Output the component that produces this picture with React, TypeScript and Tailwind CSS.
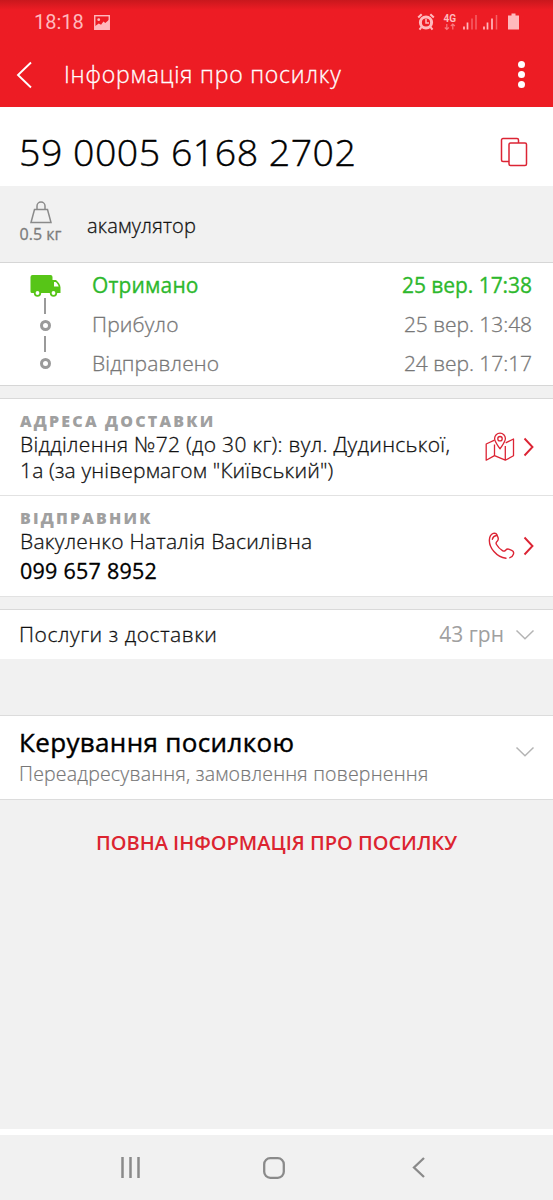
import type { ReactNode } from "react";

const events = [
  { name: "Отримано", date: "25 вер. 17:38", active: true },
  { name: "Прибуло", date: "25 вер. 13:48", active: false },
  { name: "Відправлено", date: "24 вер. 17:17", active: false },
];

function StatusBar() {
  return (
    <div className="flex h-11 items-center justify-between pr-[33px] pl-[34px] text-[#ffb9bd]">
      <div className="flex items-center gap-[10px]">
        <span className="font-[Roboto] text-[20px] leading-none">18:18</span>
        <svg width="16" height="15" viewBox="0 0 17 16" fill="none">
          <rect x="0.75" y="0.75" width="15.5" height="14.5" stroke="currentColor" strokeWidth="1.5" />
          <circle cx="5" cy="5" r="1.5" fill="currentColor" />
          <path d="M1 12l4-3 2.5 1.5L10 7l2 1.5L16 5v10H1z" fill="currentColor" />
        </svg>
      </div>
      <svg width="103" height="20" viewBox="0 0 103 20" fill="none">
        <circle cx="9" cy="10.500" r="5.600" stroke="currentColor" strokeWidth="3" />
        <path d="M9 7v4h3" stroke="currentColor" strokeWidth="1.500" />
        <path d="M1.200 5.500L4.700 2.300M16.800 5.500l-3.500-3.200M4.500 15l-2 2.700M13.500 15l2 2.700" stroke="currentColor" strokeWidth="2.100" />
        <text x="26.500" y="9.500" fontSize="10" fontWeight="700" fontFamily="Roboto, sans-serif" fill="currentColor">4G</text>
        <path d="M29.800 12v5.500m-2-2l2 2 2-2M35.800 17.500V12m-2 2l2-2 2 2" stroke="currentColor" strokeWidth="1.200" opacity="0.6" />
        <path d="M47 14.500v3M50.500 10.500v7M67 14.500v3M70.500 10.500v7M75 6.500v11" stroke="currentColor" strokeWidth="1.700" />
        <path d="M55 6.500v11M59 3v14.500M79.500 3v14.500" stroke="currentColor" strokeWidth="1.500" opacity="0.45" />
        <path d="M94.500 1.500h4v2h3.500v14H91v-14h3.500z" fill="currentColor" />
      </svg>
    </div>
  );
}

function Chevron({ className = "" }: { className?: string }) {
  return (
    <svg className={className} width="20" height="12" viewBox="0 0 20 12" fill="none">
      <path d="M1.500 1.500L10 9.800l8.500-8.300" stroke="#b4b4b4" strokeWidth="1.500" />
    </svg>
  );
}

function ArrowRight() {
  return (
    <svg width="11" height="20" viewBox="0 0 11 20" fill="none">
      <path d="M1.500 1.500l8 8.500-8 8.500" stroke="#dc2434" strokeWidth="1.900" />
    </svg>
  );
}

function MapIcon() {
  return (
    <svg width="30" height="30" viewBox="0 0 30 30" fill="none" stroke="#dc2434" strokeWidth="1.300" strokeLinejoin="round">
      <path d="M9.500 8.200L1.200 12v16.200l8.300-4.600 10.800 4.600 8.200-4.400V7l-7.800 3.800M9.500 12.500v11.100M20.300 14v14.200" />
      <path d="M15 16.800c-2.500-3.700-5.400-6.900-5.400-10.200a5.400 5.400 0 0 1 10.800 0c0 3.300-2.900 6.500-5.400 10.200z" />
      <circle cx="15" cy="6.700" r="2.200" />
    </svg>
  );
}

function PhoneIcon() {
  return (
    <svg width="27" height="28" viewBox="0 0 27 28" fill="none" stroke="#dc2434" strokeWidth="1.400" strokeLinecap="round" strokeLinejoin="round">
      <path d="M18 26.200C8.500 25.200.9 15.500 1.400 7.800 1.600 4.500 3.200 2.200 5.300 1.400c1.500-.5 3 0 3.700 1.500l1 2.700c.6 1.700.2 2.900-1 3.900-1.200 1-1.200 1.800-.5 3 1.500 2.600 3.600 4.700 6 6.200 1.300.8 2.100.6 3.100-.5 1-1.100 2.200-1.400 3.700-.9l2.400 1c1.700.8 2.300 2.200 1.700 3.900-.6 1.700-1.700 2.900-3.500 3.500M4.400 7.200c.5-2.200 2-3.500 4.100-3.700" />
    </svg>
  );
}

function Truck() {
  return (
    <svg width="31" height="22" viewBox="0 0 30 22" fill="none">
      <path d="M2 0h18a2 2 0 0 1 2 2v3h3.500c2.500 2 4.500 5 4.500 7.500V18H1.500A1.500 1.500 0 0 1 0 16.500V2a2 2 0 0 1 2-2z" fill="#57c517" />
      <path d="M23.500 7h1.500c1.500 1 2.700 2.700 3.200 4.500h-4.700z" fill="#fff" />
      <circle cx="7" cy="18" r="2.800" fill="#fff" stroke="#57c517" strokeWidth="1.800" />
      <circle cx="23" cy="18" r="2.800" fill="#fff" stroke="#57c517" strokeWidth="1.800" />
    </svg>
  );
}

function Caption({ children }: { children: ReactNode }) {
  return (
    <div className="text-[16px] leading-[22px] font-extrabold tracking-[2.200px] text-[#a0a0a0]">
      {children}
    </div>
  );
}

function App() {
  return (
    <div className="flex h-[1200px] w-[553px] flex-col overflow-hidden bg-[#f1f1f1] font-['Open_Sans',sans-serif] whitespace-nowrap text-[#111]">
      <header className="h-[107px] shrink-0 bg-[#ed1c24] bg-linear-to-b from-[#c9171d] to-[#ed1c24] to-[10px] text-white">
        <StatusBar />
        <div className="flex h-[61px] items-center pr-7 pl-4">
          <svg width="16" height="28" viewBox="0 0 16 28" fill="none">
            <path d="M15 1.500L2 14l13 12.500" stroke="#fff" strokeWidth="1.900" />
          </svg>
          <h1 className="ml-8 text-[23px] font-light tracking-[0.8px] [-webkit-text-stroke:0.3px]">Інформація про посилку</h1>
          <div className="ml-auto flex flex-col gap-[3px]">
            <span className="size-[7px] rounded-full bg-white" />
            <span className="size-[7px] rounded-full bg-white" />
            <span className="size-[7px] rounded-full bg-white" />
          </div>
        </div>
      </header>

      <section className="flex h-[79px] shrink-0 items-center justify-between bg-white pt-[10px] pr-[25px] pl-[19px]">
        <div className="text-[37.5px] leading-none font-light tracking-[0.5px] text-black [-webkit-text-stroke:0.4px]">59 0005 6168 2702</div>
        <svg width="28" height="30" viewBox="0 0 28 30" fill="none" stroke="#dc2434" strokeWidth="1.500">
          <path d="M9 24.500H3a1.500 1.500 0 0 1-1.500-1.500V3A1.500 1.500 0 0 1 3 1.500h14A1.500 1.500 0 0 1 18.500 3v3" />
          <rect x="9" y="6" width="17.500" height="22.500" rx="1.500" />
        </svg>
      </section>

      <section className="flex h-[76px] shrink-0 items-center pl-[19px]">
        <div className="mt-[-3px] flex w-[43px] flex-col items-center">
          <svg width="22" height="23" viewBox="0 0 22 23" fill="none" stroke="#8a8a8a" strokeWidth="1.500">
            <path d="M4.500 8.500h13l3.500 13H1zM7 8.500V5a4 4 0 0 1 8 0v3.500" />
          </svg>
          <span className="text-[16px] leading-5 text-[#7c7c7c] [-webkit-text-stroke:0.3px]">0.5 кг</span>
        </div>
        <span className="ml-[25px] pt-[3px] text-[20px] font-light tracking-[0.2px] [-webkit-text-stroke:0.3px]">акамулятор</span>
      </section>

      <section className="flex h-[124px] shrink-0 border-y border-[#d6d6d6] bg-white pt-[3px] pr-[21px] pl-[30px]">
        <div className="flex w-[30px] flex-col items-center pt-[9px]">
          <Truck />
          <span className="mt-px h-4 w-[2.5px] bg-[#9a9a9a]" />
          <span className="mt-[6px] size-[11px] rounded-full border-[3px] border-[#9a9a9a]" />
          <span className="mt-[5px] h-4 w-[2.5px] bg-[#9a9a9a]" />
          <span className="mt-[6px] size-[11px] rounded-full border-[3px] border-[#9a9a9a]" />
        </div>
        <div className="ml-8 flex-1">
          {events.map((event) => (
            <div
              key={event.name}
              className={`flex h-[39px] items-center justify-between text-[21px] tracking-[0.15px] [-webkit-text-stroke:0.3px] ${event.active ? "text-[#2db82d]" : "font-light text-[#777]"}`}
            >
              <span>{event.name}</span>
              <span className="tracking-[-0.05px]">{event.date}</span>
            </div>
          ))}
        </div>
      </section>

      <section className="mt-[12px] h-[97px] shrink-0 border-t border-[#d9d9d9] bg-white pr-[19px] pl-[20px]">
        <div className="flex justify-between pt-[11px]">
          <div>
            <Caption>АДРЕСА ДОСТАВКИ</Caption>
            <p className="text-[21px] leading-[25.5px] font-light tracking-[0.3px] [-webkit-text-stroke:0.3px]">
              Відділення №72 (до 30 кг): вул. Дудинської,
              <br />
              <span className="tracking-[0.17px]">1а (за універмагом "Київський")</span>
            </p>
          </div>
          <div className="flex items-center gap-[8px]">
            <MapIcon />
            <ArrowRight />
          </div>
        </div>
      </section>

      <section className="h-[102px] shrink-0 border-y border-[#e2e2e2] bg-white pr-[19px] pl-[20px]">
        <div className="flex justify-between pt-[11px]">
          <div>
            <Caption>ВІДПРАВНИК</Caption>
            <p className="text-[21px] leading-[25px] font-light tracking-[0.27px] [-webkit-text-stroke:0.3px]">Вакуленко Наталія Василівна</p>
            <p className="text-[21.500px] leading-[33px] tracking-[0.25px] text-black [-webkit-text-stroke:0.3px]">099 657 8952</p>
          </div>
          <div className="flex items-center gap-[8px] pb-[2px]">
            <PhoneIcon />
            <ArrowRight />
          </div>
        </div>
      </section>

      <section className="mt-[12px] flex h-[50px] shrink-0 items-center border-t border-[#d9d9d9] bg-white pr-[18px] pl-[19px] text-[21px]">
        <span className="font-light tracking-[0.550px] [-webkit-text-stroke:0.3px]">Послуги з доставки</span>
        <span className="ml-auto text-[#a0a0a0]">43 грн</span>
        <Chevron className="ml-[11px]" />
      </section>

      <section className="mt-14 flex h-[85px] shrink-0 items-center justify-between border-y border-[#dcdcdc] bg-white pt-px pr-[18px] pl-[19px]">
        <div>
          <h2 className="text-[26px] leading-8 tracking-[0.35px] text-black [-webkit-text-stroke:0.4px]">Керування посилкою</h2>
          <p className="text-[19.500px] leading-8 font-light tracking-[0.2px] text-[#777] [-webkit-text-stroke:0.2px]">Переадресування, замовлення повернення</p>
        </div>
        <Chevron className="mt-[-13px]" />
      </section>

      <button className="mt-[28px] self-center text-[20px] leading-[30px] font-semibold text-[#dc2430]">
        ПОВНА ІНФОРМАЦІЯ ПРО ПОСИЛКУ
      </button>

      <nav className="mt-auto flex h-[71px] shrink-0 items-center justify-between border-t-[6px] border-white pr-[128px] pl-[120px]">
        <svg width="21" height="21" viewBox="0 0 21 21" stroke="#8a8a8a" strokeWidth="2.500">
          <path d="M2.500 0v21M10.500 0v21M18.500 0v21" />
        </svg>
        <svg className="mr-[5px]" width="22" height="22" viewBox="0 0 22 22" fill="none" stroke="#8a8a8a" strokeWidth="2.300">
          <rect x="1.200" y="1.200" width="19.600" height="19.600" rx="6" />
        </svg>
        <svg width="13" height="21" viewBox="0 0 13 21" fill="none" stroke="#8a8a8a" strokeWidth="2.300">
          <path d="M12 1L2 10.500 12 20" />
        </svg>
      </nav>
    </div>
  );
}

export default App;
